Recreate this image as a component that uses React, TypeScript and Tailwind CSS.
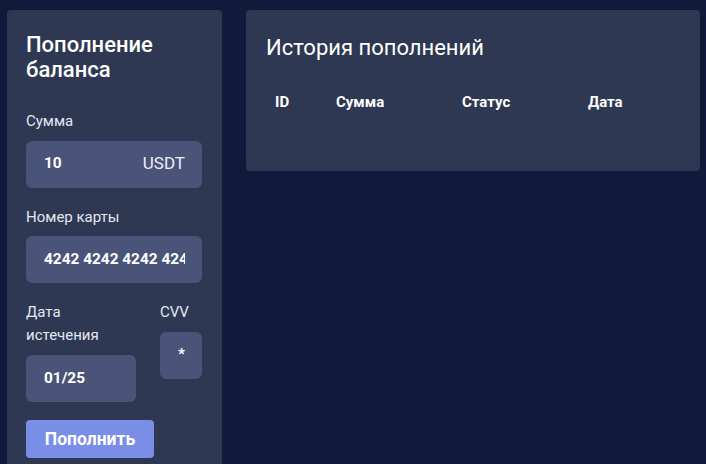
import React from "react";

const font = { fontFamily: "Roboto, 'Noto Sans', sans-serif" };

function Field({
  label,
  children,
  className = "",
}: {
  label: React.ReactNode;
  children: React.ReactNode;
  className?: string;
}) {
  return (
    <div className={className}>
      <div className="mb-[8px] text-[15px] leading-[22.5px] text-[#e4e7f1]">{label}</div>
      {children}
    </div>
  );
}

// Read-only value box; the text is clipped at the content edge.
function ValueBox({ value, suffix }: { value: string; suffix?: string }) {
  return (
    <div className="flex h-[47px] w-full items-center gap-2 rounded-[6px] bg-[#4a5378] pl-[18px] pr-[17px]">
      <div className="min-w-0 flex-1 overflow-hidden whitespace-nowrap text-[15.4px] font-bold text-white">
        {value}
      </div>
      {suffix && <span className="shrink-0 text-[17px] text-[#eef0f7]">{suffix}</span>}
    </div>
  );
}

export default function App() {
  return (
    <div
      className="flex h-[464px] items-start gap-6 overflow-hidden bg-[#121a3b] pl-[7px] pr-[6px] pt-[10px]"
      style={font}
    >
      {/* Top-up form */}
      <aside className="w-[215px] shrink-0 rounded-[4px] bg-[#2e3852] pb-[20px] pl-[19px] pr-[20px] pt-[22px]">
        <h2 className="mb-[28px] text-[22px] font-medium leading-[25px] text-white">
          Пополнение баланса
        </h2>

        <Field label="Сумма" className="mb-[18px]">
          <ValueBox value="10" suffix="USDT" />
        </Field>

        <Field label="Номер карты" className="mb-[18px]">
          <ValueBox value="4242 4242 4242 4242" />
        </Field>

        <div className="mb-[18px] flex items-start gap-6">
          <Field
            label={
              <>
                Дата
                <br />
                истечения
              </>
            }
            className="w-[110px]"
          >
            <div className="pt-px">
              <ValueBox value="01/25" />
            </div>
          </Field>
          <Field label="CVV" className="w-[42px]">
            <ValueBox value="*" />
          </Field>
        </div>

        <button className="h-[38px] w-[128px] rounded-[4px] bg-[#7a8de7] text-[17.5px] font-bold text-white">
          Пополнить
        </button>
      </aside>

      {/* Top-up history */}
      <section className="flex-1 rounded-[4px] bg-[#2e3852] px-5 pb-[57px] pt-[25px]">
        <h2 className="mb-[30px] text-[22px] font-normal leading-[26px] text-white">
          История пополнений
        </h2>
        <div className="grid grid-cols-[61px_126px_126px_1fr] text-[15px] font-bold leading-[22.5px] text-white">
          <div className="pl-[9px]">ID</div>
          <div className="pl-[9px]">Сумма</div>
          <div className="pl-[9px]">Статус</div>
          <div className="pl-[9px]">Дата</div>
        </div>
      </section>
    </div>
  );
}
